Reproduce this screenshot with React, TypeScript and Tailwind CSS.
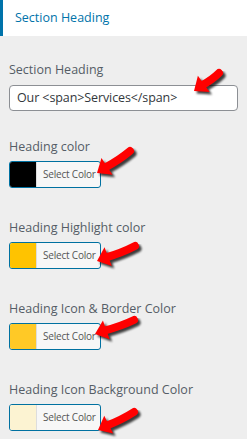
import React from "react";

type Pt = [number, number];

interface ColorField {
  label: string;
  swatch: string;
}

const colorFields: ColorField[] = [
  { label: "Heading color", swatch: "#000000" },
  { label: "Heading Highlight color", swatch: "#ffc300" },
  { label: "Heading Icon & Border Color", swatch: "#ffc926" },
  { label: "Heading Icon Background Color", swatch: "#fcf3d2" },
];

// tip, tail of each red annotation arrow (page coords)
const arrows: [Pt, Pt][] = [
  [[194, 91], [219, 73]],
  [[97, 173], [130, 151]],
  [[97, 261], [135, 246]],
  [[95, 334], [134, 320]],
  [[98, 430], [134, 412]],
];

function arrowShape(tip: Pt, tail: Pt) {
  const dx = tip[0] - tail[0];
  const dy = tip[1] - tail[1];
  const len = Math.hypot(dx, dy);
  const ux = dx / len;
  const uy = dy / len;
  const nx = -uy;
  const ny = ux;
  const bx = tip[0] - 12 * ux;
  const by = tip[1] - 12 * uy;
  const hw = 10;
  const head = `${tip[0]},${tip[1]} ${bx + hw * nx},${by + hw * ny} ${bx - hw * nx},${by - hw * ny}`;
  const mx = (bx + tail[0]) / 2 - 1.5 * nx;
  const my = (by + tail[1]) / 2 - 1.5 * ny;
  const shaft = `M${bx + 2 * ux} ${by + 2 * uy} Q${mx} ${my} ${tail[0]} ${tail[1]}`;
  return { head, shaft };
}

function Arrows() {
  return (
    <svg className="pointer-events-none absolute inset-0" width="247" height="439">
      <defs>
        <filter id="arrow-shadow" x="-20%" y="-20%" width="160%" height="160%">
          <feGaussianBlur stdDeviation="1.2" />
        </filter>
      </defs>
      {arrows.map(([tip, tail], i) => {
        const { head, shaft } = arrowShape(tip, tail);
        return (
          <g key={i}>
            <g transform="translate(2.5 2.5)" filter="url(#arrow-shadow)" opacity="0.75">
              <polygon points={head} fill="#000" />
              <path d={shaft} stroke="#000" strokeWidth="8" strokeLinecap="round" fill="none" />
            </g>
            <polygon points={head} fill="#ff0000" />
            <path d={shaft} stroke="#ff0000" strokeWidth="8" strokeLinecap="round" fill="none" />
          </g>
        );
      })}
    </svg>
  );
}

function ColorButton({ swatch }: { swatch: string }) {
  return (
    <div className="flex h-[27px] w-[92px] overflow-hidden rounded-[3px] border border-[#0071a1] bg-[#f7f7f7]">
      <span className="w-[27px] shrink-0 border-r border-[#dddddd]" style={{ backgroundColor: swatch }} />
      <span className="flex flex-1 items-center whitespace-nowrap pl-[6px] text-[10px] tracking-[-0.2px] text-[#555555]">
        Select Color
      </span>
    </div>
  );
}

export default function App() {
  return (
    <div className="relative h-[439px] w-[247px] overflow-hidden bg-[#eeeeee] font-['Open_Sans',sans-serif]">
      {/* Section header */}
      <div className="flex h-[36px] items-center border-l-[3px] border-[#0073aa] bg-white pl-[12px] text-[12.5px] text-[#0073aa]">
        Section Heading
      </div>

      <div className="px-[9px] pt-[24px]">
        <label className="block text-[12.5px] leading-[20px] text-[#555d66]">Section Heading</label>
        <div className="mt-[5px] flex h-[26px] items-center whitespace-nowrap rounded-[4px] border border-[#8c8f94] bg-white px-[7px] text-[12.5px] tracking-[-0.1px] text-[#32373c]">
          Our &lt;span&gt;Services&lt;/span&gt;
        </div>

        <div className="mt-[26px] flex flex-col gap-[30px]">
          {colorFields.map((f) => (
            <div key={f.label}>
              <div className="mb-[4px] text-[12.5px] leading-[20px] text-[#555d66]">{f.label}</div>
              <ColorButton swatch={f.swatch} />
            </div>
          ))}
        </div>
      </div>

      <Arrows />
    </div>
  );
}
